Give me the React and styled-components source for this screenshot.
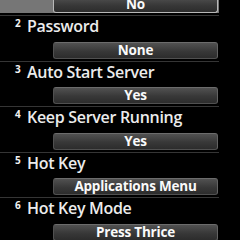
import React from 'react';
import styled, { createGlobalStyle } from 'styled-components';

const GlobalStyle = createGlobalStyle`
    html, body {
        margin: 0;
        padding: 0;
        background: #000;
    }
    body {
        font-family: "Open Sans", "Noto Sans", sans-serif;
    }
`;

const Screen = styled.div`
    width: 240px;
    height: 240px;
    overflow: hidden;
    background: #000;
`;

// list is scrolled: only the value row of the first (selected) item shows
const List = styled.div`
    width: 219px;
    margin-top: -5px;
    display: flex;
    flex-direction: column;
`;

const Item = styled.div`
    display: flex;
    flex-direction: column;
    border-top: 1px solid ${(p) => (p.selected ? '#6f6f6f' : '#353535')};
    padding-bottom: ${(p) => (p.selected ? '0' : '2px')};
    margin-bottom: ${(p) => (p.selected ? '2px' : '0')};
    background: ${(p) => (p.selected ? '#767676' : 'transparent')};
`;

const Label = styled.div`
    display: flex;
    align-items: flex-start;
    height: 20px;
    line-height: 20px;
    padding-left: 15px;
    font-size: 16px;
    font-weight: 600;
    letter-spacing: -0.3px;
    color: #ececec;
    white-space: nowrap;
`;

const Num = styled.span`
    width: 12px;
    font-size: 10px;
    font-weight: 700;
    line-height: 14px;
    color: #f2f2f2;
`;

const Value = styled.div`
    box-sizing: border-box;
    height: 17px;
    margin: ${(p) => (p.top ? '0' : '5.5px')} 0 0 53px;
    width: 165px;
    border-radius: 3px;
    border: 1px solid ${(p) => (p.selected ? '#b8b8b8' : '#505050')};
    border-top-color: ${(p) => (p.selected ? '#c4c4c4' : '#6c6c6c')};
    border-right-color: ${(p) => (p.selected ? '#b8b8b8' : '#636363')};
    background: linear-gradient(#515151, #383838 55%, #2c2c2c);
    display: flex;
    align-items: center;
    justify-content: center;
    font-size: 13.5px;
    font-weight: 700;
    letter-spacing: -0.2px;
    color: #fafafa;
    line-height: 15px;
    white-space: nowrap;
`;

const settings = [
    { n: 1, label: null, value: 'No' },
    { n: 2, label: 'Password', value: 'None' },
    { n: 3, label: 'Auto Start Server', value: 'Yes' },
    { n: 4, label: 'Keep Server Running', value: 'Yes' },
    { n: 5, label: 'Hot Key', value: 'Applications Menu' },
    { n: 6, label: 'Hot Key Mode', value: 'Press Thrice' },
];

const App = () => {
    return (
        <>
            <GlobalStyle />
            <Screen>
                <List>
                    {settings.map((s, i) => (
                        <Item key={s.n} selected={i === 0}>
                            {s.label && (
                                <Label>
                                    <Num>{s.n}</Num>
                                    {s.label}
                                </Label>
                            )}
                            <Value selected={i === 0} top={!s.label}>
                                {s.value}
                            </Value>
                        </Item>
                    ))}
                </List>
            </Screen>
        </>
    );
};

export default App;
